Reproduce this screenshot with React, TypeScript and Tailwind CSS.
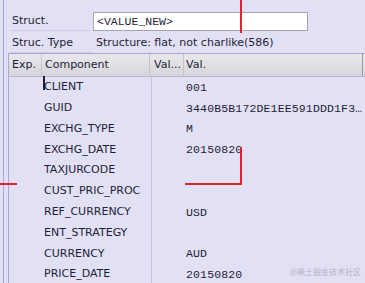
import React from "react";

const rows: [string, string][] = [
  ["CLIENT", "001"],
  ["GUID", "3440B5B172DE1EE591DDD1F3…"],
  ["EXCHG_TYPE", "M"],
  ["EXCHG_DATE", "20150820"],
  ["TAXJURCODE", ""],
  ["CUST_PRIC_PROC", ""],
  ["REF_CURRENCY", "USD"],
  ["ENT_STRATEGY", ""],
  ["CURRENCY", "AUD"],
  ["PRICE_DATE", "20150820"],
];

const sans = { fontFamily: '"DejaVu Sans", Verdana, sans-serif' };
const mono = { fontFamily: '"Liberation Mono", "Courier New", monospace' };

export default function App() {
  return (
    <div
      className="relative w-[365px] h-[283px] overflow-hidden bg-[#e2e0f5] text-[#1f1e38] flex"
      style={sans}
    >
      <div className="w-[3px] shrink-0" />
      <div className="flex-1 border-l border-[#aaa6d8] flex flex-col">
        <div className="h-[12px] shrink-0" />
        {/* Struct row */}
        <div className="flex h-[19px] shrink-0">
          <div className="w-[89px] shrink-0 pl-[6px] h-full">
            <div className="w-[80px] h-full border-b border-[#cfcde6] text-[11px] pl-[2px] flex items-center pt-[1px]">
              Struct.
            </div>
          </div>
          <div
            className="w-[215px] h-[19px] bg-white border border-[#a6a6b0] flex items-center pl-[3px] text-[11.5px]"
            style={mono}
          >
            &lt;VALUE_NEW&gt;
          </div>
        </div>
        {/* Struc type row */}
        <div className="flex h-[22px] shrink-0">
          <div className="w-[92px] shrink-0 pl-[6px] h-full">
            <div className="w-[83px] h-full border-b border-[#cfcde6] text-[11px] pl-[2px] flex items-center pt-[3px]">
              Struc. Type
            </div>
          </div>
          <div className="text-[11px] h-full flex items-center pt-[3px]">
            Structure: flat, not charlike(586)
          </div>
        </div>
        {/* Table */}
        <div className="flex-1 flex">
          <div className="w-[4px] shrink-0" />
          <div className="flex-1 border-l border-t border-[#aaa6d8] flex flex-col">
            <div className="flex h-[23px] shrink-0 bg-gradient-to-b from-[#e8e8ec] to-[#d5d5db] border-b border-[#b9b9c2] text-[11px] items-center">
              <div className="w-[33px] h-full border-r border-[#c4c4cc] flex items-center pl-[3px]">Exp.</div>
              <div className="w-[108px] h-full border-r border-[#c4c4cc] flex items-center pl-[3px]">Component</div>
              <div className="w-[34px] h-full border-r border-[#c4c4cc] flex items-center pl-[4px]">Val...</div>
              <div className="w-[179px] h-full border-r border-[#9c9ca6] flex items-center pl-[2px]">Val.</div>
            </div>
            <div className="flex flex-col">
              {rows.map(([c, v], i) => (
                <div key={c} className="flex h-[20.8px] items-center">
                  <div className="w-[33px] shrink-0" />
                  <div className="w-[109px] shrink-0 text-[11px] pl-[2px] relative">
                    {i === 0 && (
                      <span className="absolute left-[1px] top-[-3px] w-[2px] h-[14px] bg-[#1f1e38]" />
                    )}
                    {c}
                  </div>
                  <div className="w-[34px] shrink-0 h-full border-l border-[#c6c4dc]" />
                  <div className="pl-[1px] text-[11.5px] whitespace-nowrap tracking-[0.15px]" style={mono}>
                    {v}
                  </div>
                </div>
              ))}
            </div>
          </div>
        </div>
      </div>

      {/* Red annotation lines */}
      <div className="absolute left-[240px] top-0 w-[1.5px] h-[33px] bg-[#e8202a]" />
      <div className="absolute left-[240px] top-[147px] w-[1.5px] h-[38px] bg-[#e8202a]" />
      <div className="absolute left-[185px] top-[183px] w-[56px] h-[1.5px] bg-[#e8202a]" />
      <div className="absolute left-0 top-[183px] w-[17px] h-[1.5px] bg-[#e8202a]" />

      {/* Watermark */}
      <div
        className="absolute right-[4px] bottom-[5px] text-[8px] text-[#b4b2c8]"
        style={{ fontFamily: '"Noto Sans CJK SC", sans-serif' }}
      >
        @稀土掘金技术社区
      </div>
    </div>
  );
}
